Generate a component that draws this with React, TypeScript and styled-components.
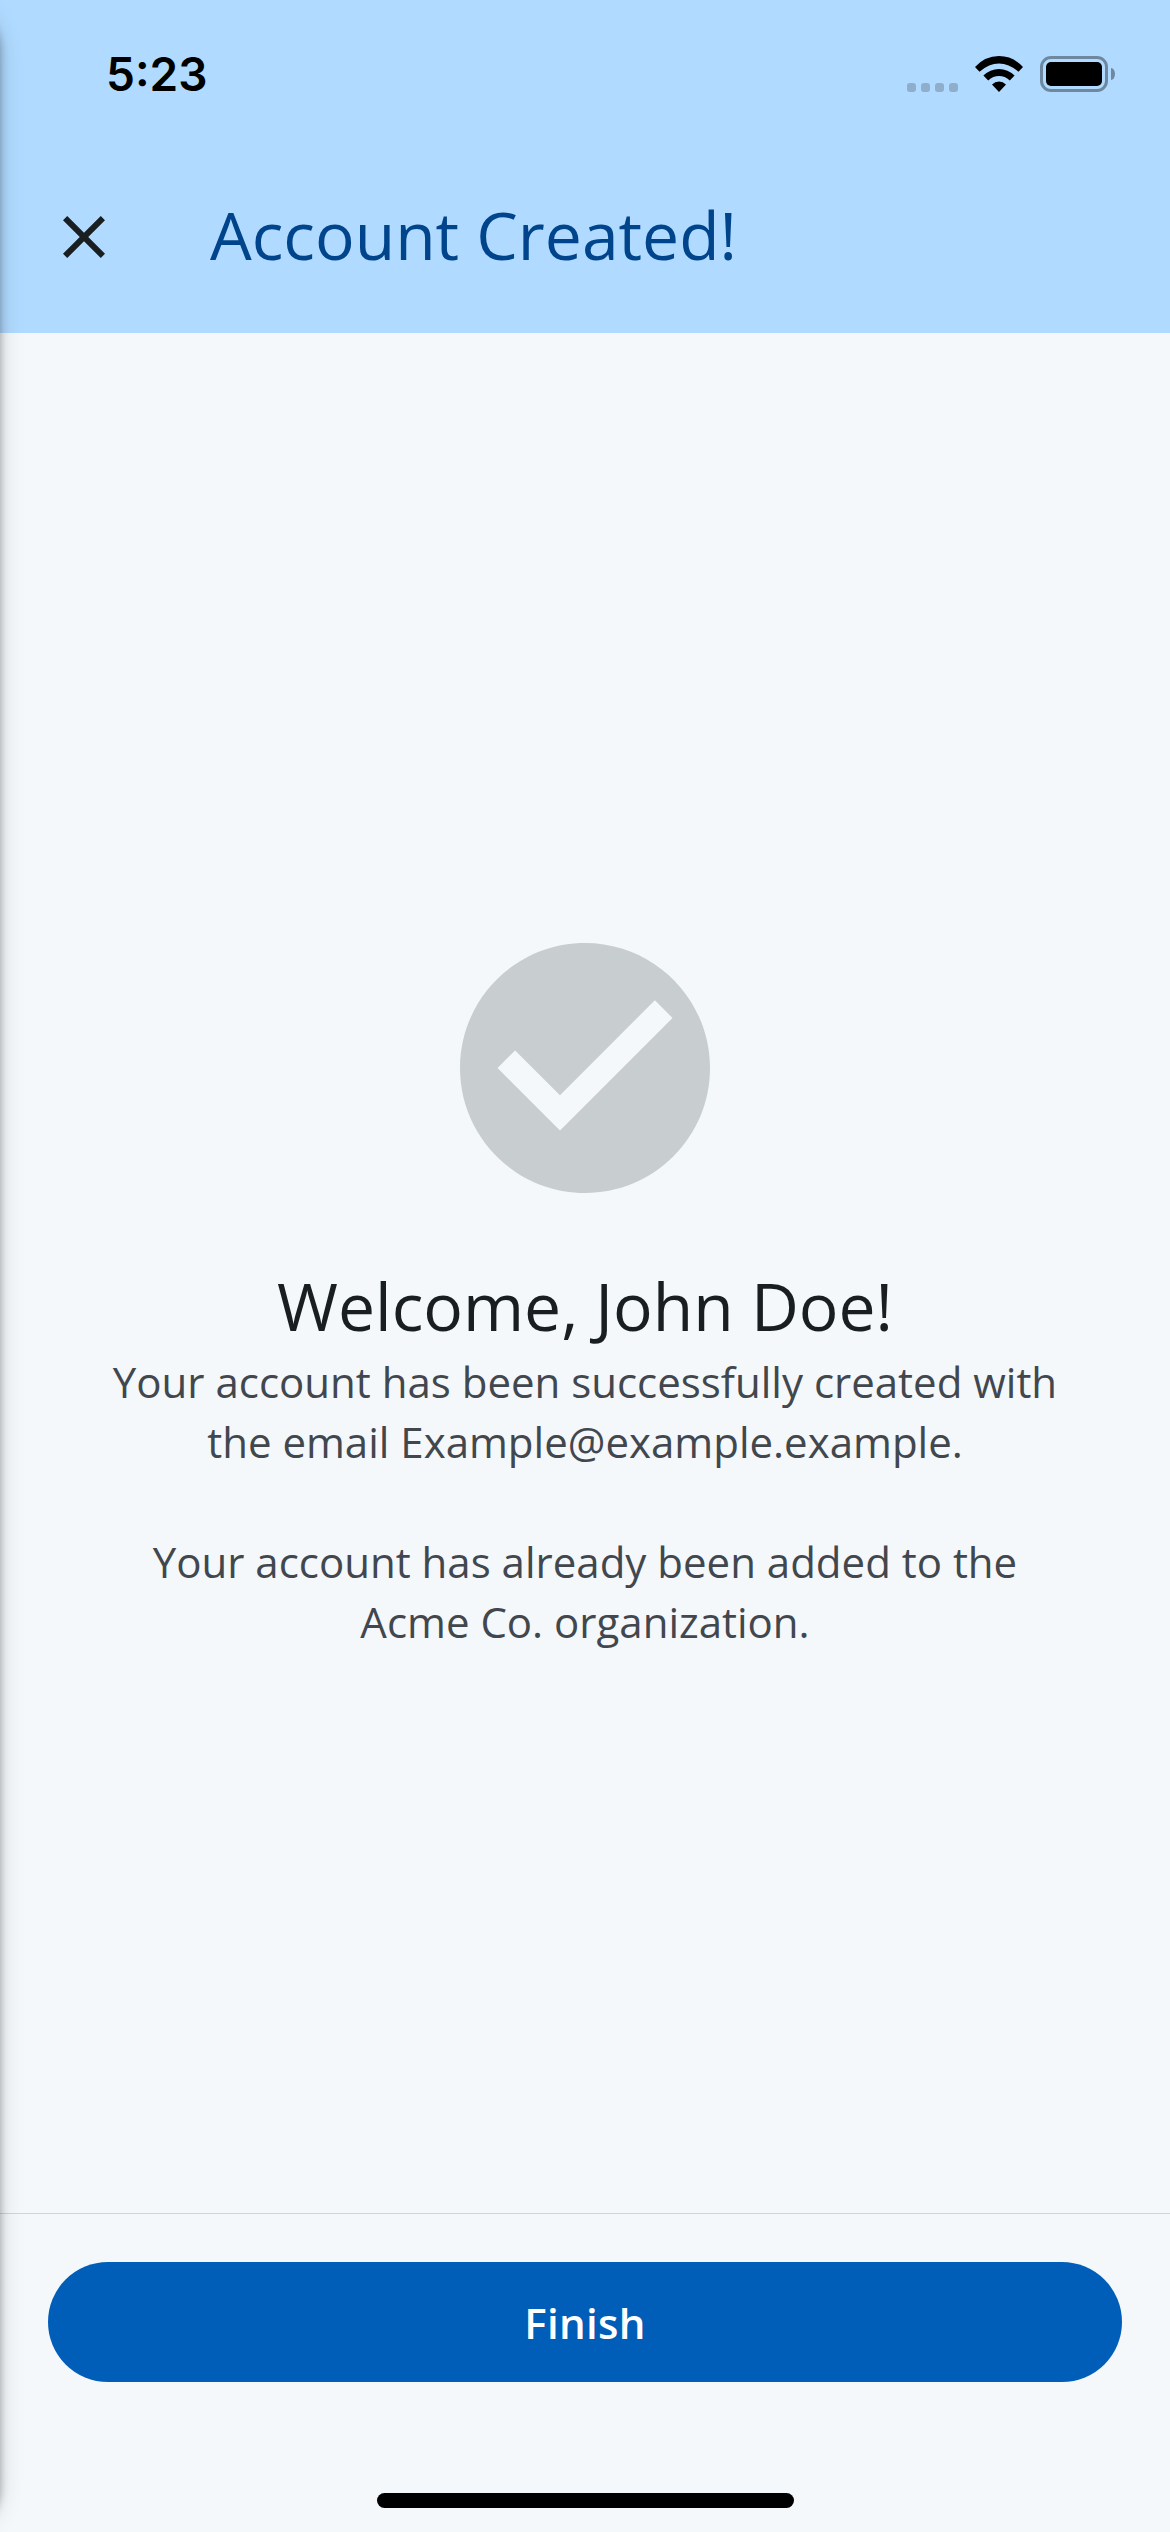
import React from "react";
import styled, { createGlobalStyle } from "styled-components";

const GlobalStyle = createGlobalStyle`
  * { box-sizing: border-box; }
  body { margin: 0; background: #f4f8fb; }
`;

const Screen = styled.div`
  position: relative;
  display: flex;
  flex-direction: column;
  width: 1170px;
  height: 2532px;
  overflow: hidden;
  background: #f4f8fb;
  font-family: "Open Sans", "Noto Sans", sans-serif;
`;

const DrawerEdge = styled.div`
  position: absolute;
  left: -60px;
  top: 0;
  width: 60px;
  height: 2532px;
  border-radius: 0 48px 48px 0;
  box-shadow: 0 3px 9px rgba(0, 0, 0, 0.3), 0 3px 24px 0 rgba(0, 0, 0, 0.15);
  pointer-events: none;
`;

const Header = styled.header`
  display: flex;
  flex-direction: column;
  height: 333px;
  background: #b0daff;
`;

const StatusBar = styled.div`
  display: flex;
  justify-content: space-between;
  align-items: center;
  height: 141px;
  padding: 7px 55px 0 106px;
`;

const Time = styled.span`
  font-family: Inter, sans-serif;
  font-size: 46px;
  font-weight: 600;
  line-height: 56px;
  color: #000;
`;

const StatusIcons = styled.div`
  display: flex;
  align-items: center;
  height: 36px;
`;

const Signal = styled.div`
  display: flex;
  align-self: flex-end;
  gap: 5px;
  margin-right: 17px;
`;

const SignalDot = styled.i`
  width: 9px;
  height: 9px;
  border-radius: 3px;
  background: #8eaecb;
`;

const Wifi = styled.svg`
  width: 48px;
  height: 36px;
  margin-right: 17px;
`;

const BatteryBody = styled.div`
  width: 68px;
  height: 36px;
  padding: 3px;
  border: 3px solid #6e889f;
  border-radius: 11px;
`;

const BatteryLevel = styled.div`
  height: 24px;
  border-radius: 5px;
  background: #000;
`;

const BatteryTip = styled.div`
  width: 4px;
  height: 12px;
  margin-left: 3px;
  border-radius: 0 4px 4px 0 / 0 6px 6px 0;
  background: #6e889f;
`;

const AppBar = styled.div`
  display: flex;
  align-items: center;
  height: 192px;
  padding-left: 48px;
`;

const IconButton = styled.button`
  display: flex;
  width: 72px;
  height: 72px;
  margin-right: 90px;
  padding: 0;
  border: 0;
  background: none;
  color: #191f21;
`;

const Title = styled.h1`
  margin: 0;
  padding-bottom: 6px;
  font-size: 66px;
  font-weight: 400;
  line-height: 84px;
  color: #00458c;
`;

const Content = styled.main`
  display: flex;
  flex: 1;
  flex-direction: column;
  align-items: center;
  padding-top: 585px;
  text-align: center;
`;

const CheckIcon = styled.svg`
  width: 300px;
  height: 300px;
  fill: #c8cdd0;
`;

const Heading = styled.h2`
  margin: 45px 0 5px;
  font-size: 66px;
  font-weight: 400;
  line-height: 84px;
  color: #191f21;
`;

const Message = styled.p`
  margin: 0 0 60px;
  font-size: 42px;
  line-height: 60px;
  color: #42474e;
`;

const Footer = styled.footer`
  display: flex;
  flex-direction: column;
  align-items: center;
  height: 319px;
  padding: 48px 48px 0;
  border-top: 1px solid #d0d5d9;
`;

const PrimaryButton = styled.button`
  width: 100%;
  height: 120px;
  padding: 1px 0 0;
  border: 0;
  border-radius: 60px;
  background: #005eb8;
  color: #fff;
  font-family: inherit;
  font-size: 42px;
  font-weight: 600;
  letter-spacing: 0.3px;
  line-height: 60px;
`;

const HomeIndicator = styled.div`
  width: 417px;
  height: 15px;
  margin: 111px 0 0 1px;
  border-radius: 8px;
  background: #000;
`;

export default function App() {
  return (
    <>
      <GlobalStyle />
      <Screen>
        <Header>
          <StatusBar>
            <Time>5:23</Time>
            <StatusIcons>
              <Signal>
                <SignalDot />
                <SignalDot />
                <SignalDot />
                <SignalDot />
              </Signal>
              <Wifi viewBox="0 0 48 36">
                <path d="M0 11Q10 0 24 0T48 11L43.5 15.7Q34 7.4 24 7.4T4.500 15.700Z" />
                <path d="M8.400 19.600Q15 12.900 24 12.900T39.600 19.600L34.800 24.400Q30 20 24 20T13.200 24.400Z" />
                <path d="M17 28.500Q20 25.500 24 25.500T31 28.500L24 36Z" />
              </Wifi>
              <BatteryBody>
                <BatteryLevel />
              </BatteryBody>
              <BatteryTip />
            </StatusIcons>
          </StatusBar>
          <AppBar>
            <IconButton aria-label="Close">
              <svg width="72" height="72" viewBox="0 0 24 24" fill="currentColor">
                <path d="M19 6.410 17.590 5 12 10.590 6.410 5 5 6.410 10.590 12 5 17.590 6.410 19 12 13.410 17.590 19 19 17.590 13.410 12z" />
              </svg>
            </IconButton>
            <Title>Account Created!</Title>
          </AppBar>
        </Header>
        <Content>
          <CheckIcon viewBox="0 0 24 24">
            <path d="M12 2C6.480 2 2 6.480 2 12s4.480 10 10 10 10-4.480 10-10S17.520 2 12 2m-2 15-5-5 1.410-1.410L10 14.170l7.590-7.590L19 8z" />
          </CheckIcon>
          <Heading>Welcome, John Doe!</Heading>
          <Message>
            Your account has been successfully created with
            <br />
            the email Example@example.example.
          </Message>
          <Message>
            Your account has already been added to the
            <br />
            Acme Co. organization.
          </Message>
        </Content>
        <Footer>
          <PrimaryButton>Finish</PrimaryButton>
          <HomeIndicator />
        </Footer>
        <DrawerEdge />
      </Screen>
    </>
  );
}
